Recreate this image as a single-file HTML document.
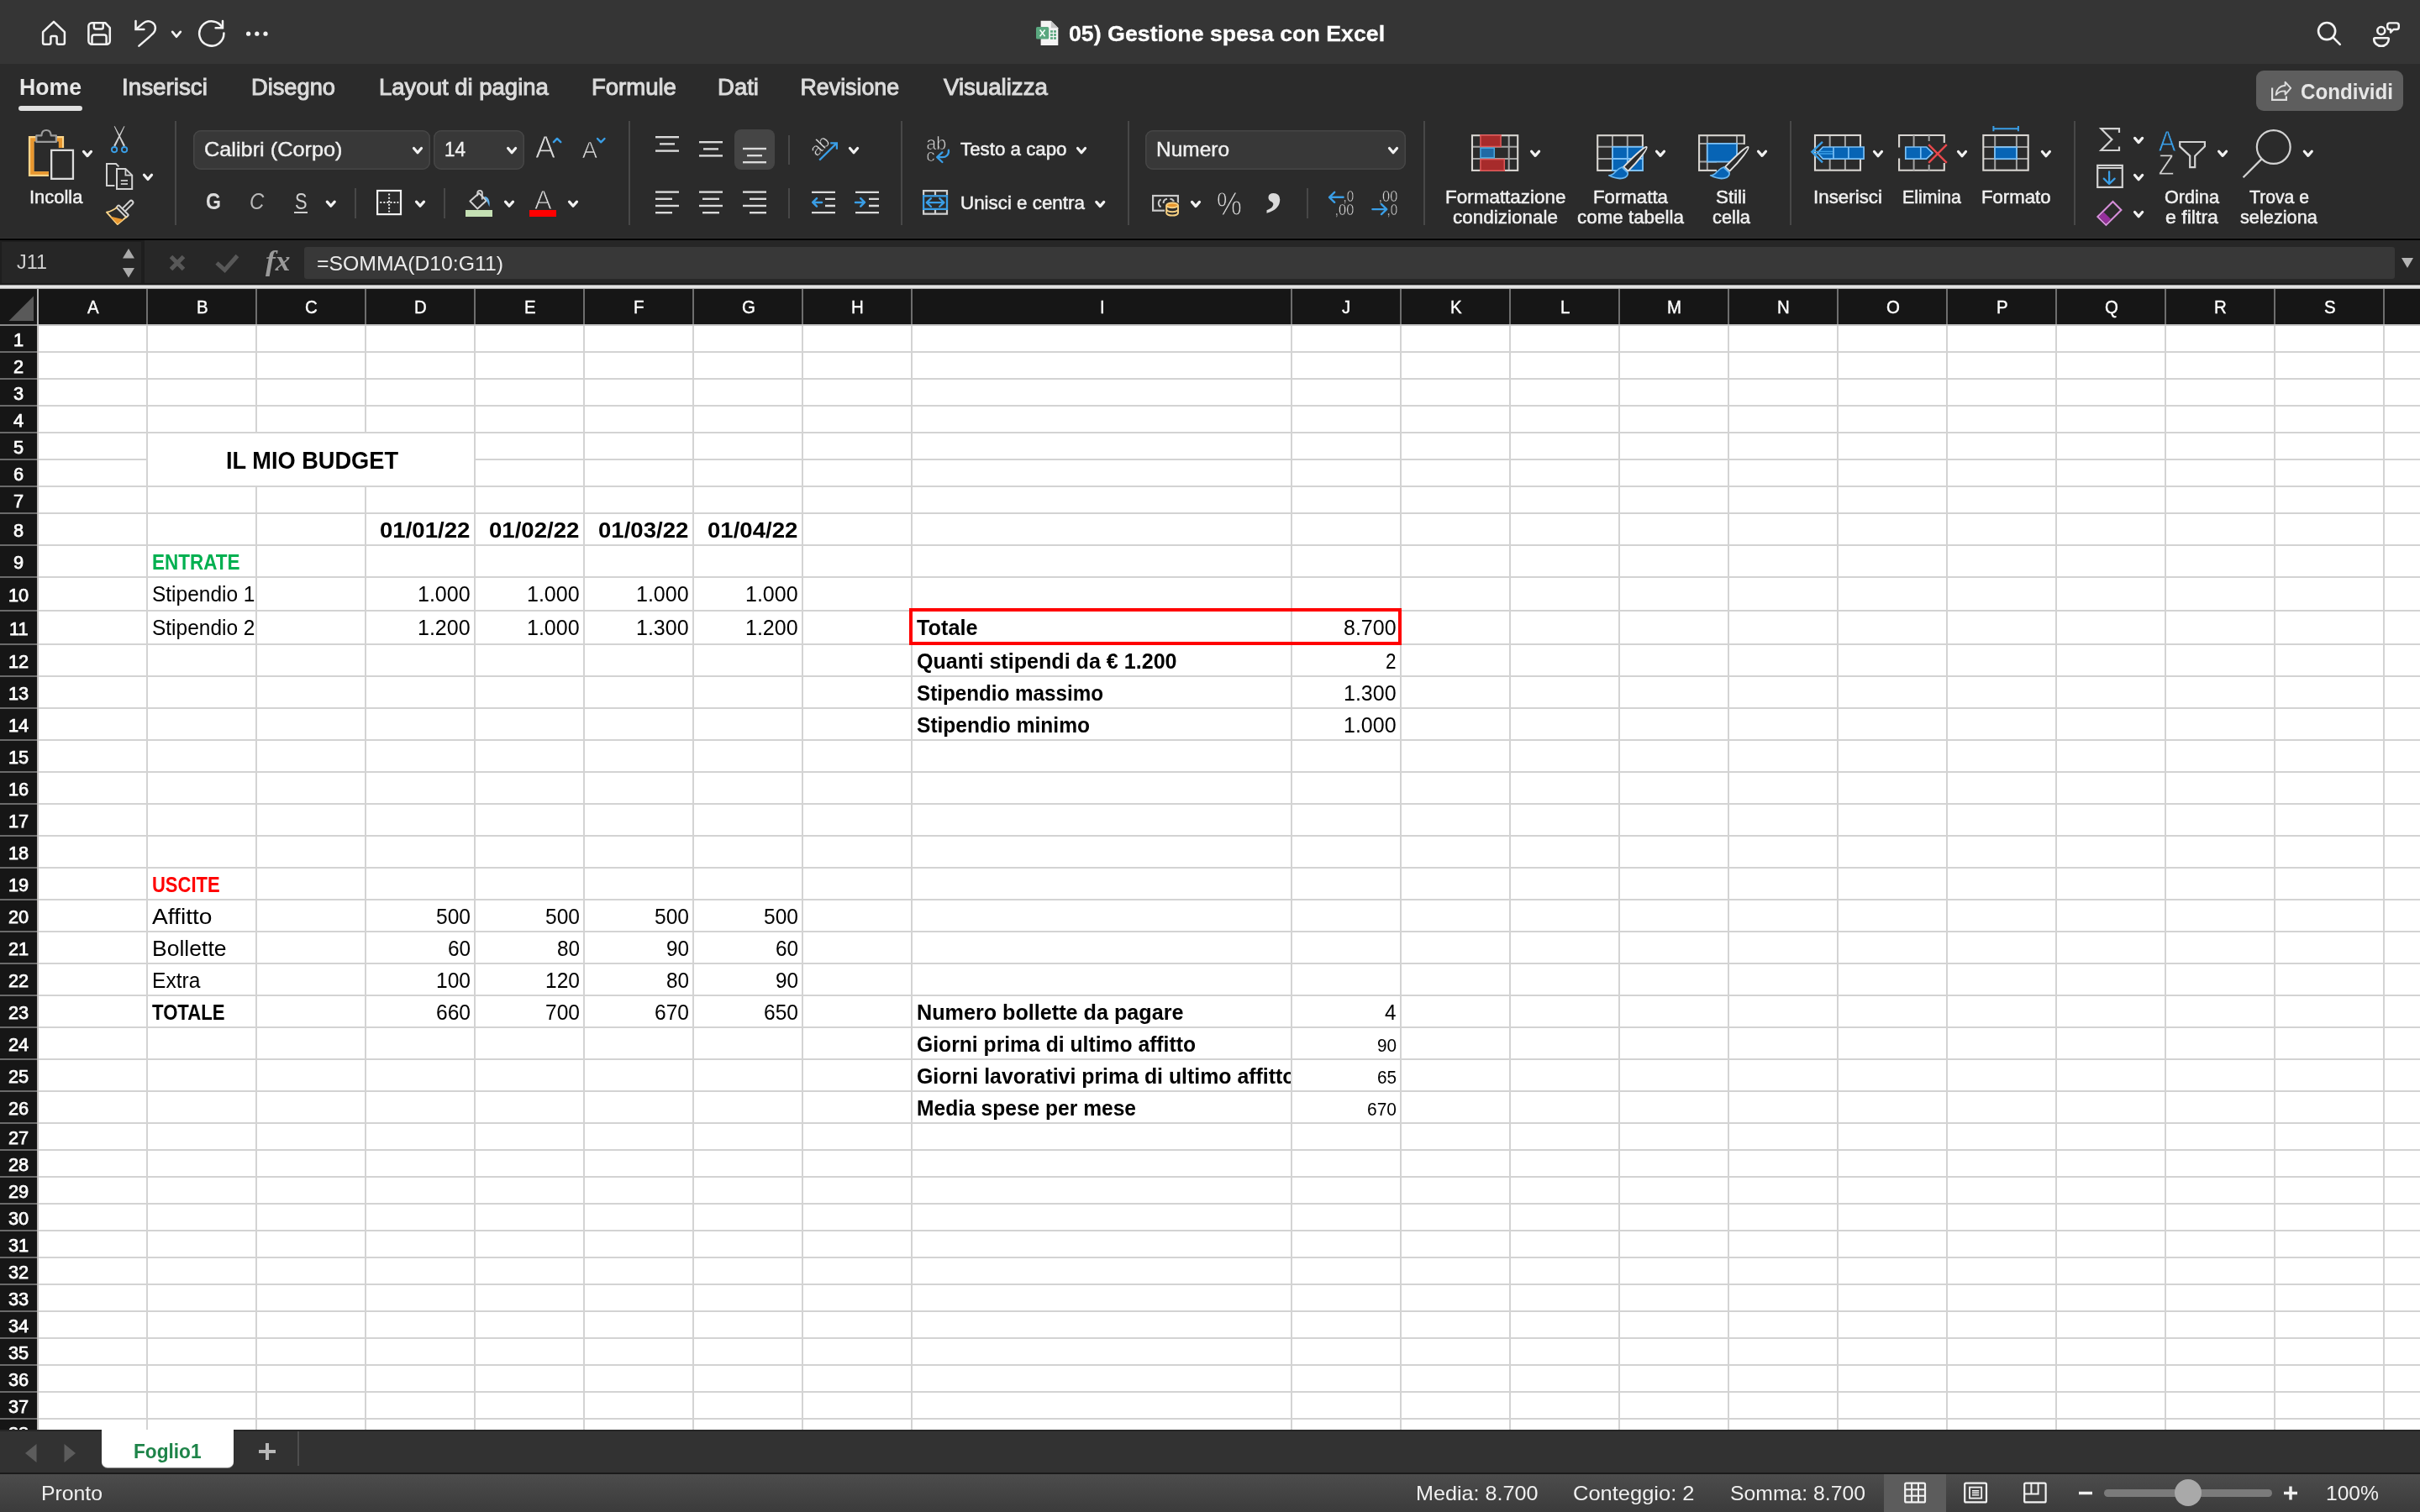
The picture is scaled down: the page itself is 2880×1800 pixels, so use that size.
<!DOCTYPE html>
<html lang="it"><head><meta charset="utf-8"><title>05) Gestione spesa con Excel</title>
<style>
html,body{margin:0;padding:0;background:#2b2b2b;}
body{width:2880px;height:1800px;overflow:hidden;position:relative;font-family:"Liberation Sans",sans-serif;}
#app{position:absolute;left:0;top:0;width:2880px;height:1800px;overflow:hidden;will-change:transform;}
#app div{position:absolute;box-sizing:content-box;}
.t{position:absolute;white-space:pre;transform-origin:0 0;display:block;}
#ico{position:absolute;left:0;top:0;}
</style></head>
<body>
<div id="app">
<div style="left:0px;top:0px;width:2880px;height:76px;background:#353535;"></div>
<div style="left:0px;top:76px;width:2880px;height:207px;background:#2b2b2b;"></div>
<div style="left:0px;top:283px;width:2880px;height:1px;background:#313131;"></div>
<div style="left:0px;top:284px;width:2880px;height:2px;background:#000000;"></div>
<div style="left:0px;top:286px;width:2880px;height:52px;background:#272727;"></div>
<div style="left:0px;top:286px;width:172px;height:52px;background:#1e1e1e;"></div>
<div style="left:2px;top:288px;width:166px;height:49px;background:#262626;"></div>
<div style="left:362px;top:294px;width:2488px;height:38px;background:#383838;border-radius:3px;"></div>
<div style="left:0px;top:337px;width:2880px;height:2px;background:#1b1b1b;"></div>
<div style="left:0px;top:339px;width:2880px;height:5px;background:linear-gradient(#8c8c8c,#e9e9e9 35%,#f2f2f2 60%,#9a9a9a);"></div>
<div style="left:0px;top:344px;width:2880px;height:43px;background:#161616;"></div>
<div style="left:0px;top:387px;width:44px;height:1315px;background:#161616;"></div>
<div style="left:44px;top:388px;width:2836px;height:1314px;background:#ffffff;"></div>
<div style="left:44px;top:386px;width:2836px;height:2px;background:#d3d3d3;"></div>
<div style="left:44px;top:418px;width:2836px;height:2px;background:#d3d3d3;"></div>
<div style="left:44px;top:450px;width:2836px;height:2px;background:#d3d3d3;"></div>
<div style="left:44px;top:482px;width:2836px;height:2px;background:#d3d3d3;"></div>
<div style="left:44px;top:514px;width:2836px;height:2px;background:#d3d3d3;"></div>
<div style="left:44px;top:546px;width:2836px;height:2px;background:#d3d3d3;"></div>
<div style="left:44px;top:578px;width:2836px;height:2px;background:#d3d3d3;"></div>
<div style="left:44px;top:610px;width:2836px;height:2px;background:#d3d3d3;"></div>
<div style="left:44px;top:648px;width:2836px;height:2px;background:#d3d3d3;"></div>
<div style="left:44px;top:686px;width:2836px;height:2px;background:#d3d3d3;"></div>
<div style="left:44px;top:726px;width:2836px;height:2px;background:#d3d3d3;"></div>
<div style="left:44px;top:766px;width:2836px;height:2px;background:#d3d3d3;"></div>
<div style="left:44px;top:804px;width:2836px;height:2px;background:#d3d3d3;"></div>
<div style="left:44px;top:842px;width:2836px;height:2px;background:#d3d3d3;"></div>
<div style="left:44px;top:880px;width:2836px;height:2px;background:#d3d3d3;"></div>
<div style="left:44px;top:918px;width:2836px;height:2px;background:#d3d3d3;"></div>
<div style="left:44px;top:956px;width:2836px;height:2px;background:#d3d3d3;"></div>
<div style="left:44px;top:994px;width:2836px;height:2px;background:#d3d3d3;"></div>
<div style="left:44px;top:1032px;width:2836px;height:2px;background:#d3d3d3;"></div>
<div style="left:44px;top:1070px;width:2836px;height:2px;background:#d3d3d3;"></div>
<div style="left:44px;top:1108px;width:2836px;height:2px;background:#d3d3d3;"></div>
<div style="left:44px;top:1146px;width:2836px;height:2px;background:#d3d3d3;"></div>
<div style="left:44px;top:1184px;width:2836px;height:2px;background:#d3d3d3;"></div>
<div style="left:44px;top:1222px;width:2836px;height:2px;background:#d3d3d3;"></div>
<div style="left:44px;top:1260px;width:2836px;height:2px;background:#d3d3d3;"></div>
<div style="left:44px;top:1298px;width:2836px;height:2px;background:#d3d3d3;"></div>
<div style="left:44px;top:1336px;width:2836px;height:2px;background:#d3d3d3;"></div>
<div style="left:44px;top:1368px;width:2836px;height:2px;background:#d3d3d3;"></div>
<div style="left:44px;top:1400px;width:2836px;height:2px;background:#d3d3d3;"></div>
<div style="left:44px;top:1432px;width:2836px;height:2px;background:#d3d3d3;"></div>
<div style="left:44px;top:1464px;width:2836px;height:2px;background:#d3d3d3;"></div>
<div style="left:44px;top:1496px;width:2836px;height:2px;background:#d3d3d3;"></div>
<div style="left:44px;top:1528px;width:2836px;height:2px;background:#d3d3d3;"></div>
<div style="left:44px;top:1560px;width:2836px;height:2px;background:#d3d3d3;"></div>
<div style="left:44px;top:1592px;width:2836px;height:2px;background:#d3d3d3;"></div>
<div style="left:44px;top:1624px;width:2836px;height:2px;background:#d3d3d3;"></div>
<div style="left:44px;top:1656px;width:2836px;height:2px;background:#d3d3d3;"></div>
<div style="left:44px;top:1688px;width:2836px;height:2px;background:#d3d3d3;"></div>
<div style="left:44px;top:386px;width:2px;height:1316px;background:#d3d3d3;"></div>
<div style="left:174px;top:386px;width:2px;height:1316px;background:#d3d3d3;"></div>
<div style="left:304px;top:386px;width:2px;height:1316px;background:#d3d3d3;"></div>
<div style="left:434px;top:386px;width:2px;height:1316px;background:#d3d3d3;"></div>
<div style="left:564px;top:386px;width:2px;height:1316px;background:#d3d3d3;"></div>
<div style="left:694px;top:386px;width:2px;height:1316px;background:#d3d3d3;"></div>
<div style="left:824px;top:386px;width:2px;height:1316px;background:#d3d3d3;"></div>
<div style="left:954px;top:386px;width:2px;height:1316px;background:#d3d3d3;"></div>
<div style="left:1084px;top:386px;width:2px;height:1316px;background:#d3d3d3;"></div>
<div style="left:1536px;top:386px;width:2px;height:1316px;background:#d3d3d3;"></div>
<div style="left:1666px;top:386px;width:2px;height:1316px;background:#d3d3d3;"></div>
<div style="left:1796px;top:386px;width:2px;height:1316px;background:#d3d3d3;"></div>
<div style="left:1926px;top:386px;width:2px;height:1316px;background:#d3d3d3;"></div>
<div style="left:2056px;top:386px;width:2px;height:1316px;background:#d3d3d3;"></div>
<div style="left:2186px;top:386px;width:2px;height:1316px;background:#d3d3d3;"></div>
<div style="left:2316px;top:386px;width:2px;height:1316px;background:#d3d3d3;"></div>
<div style="left:2446px;top:386px;width:2px;height:1316px;background:#d3d3d3;"></div>
<div style="left:2576px;top:386px;width:2px;height:1316px;background:#d3d3d3;"></div>
<div style="left:2706px;top:386px;width:2px;height:1316px;background:#d3d3d3;"></div>
<div style="left:2836px;top:386px;width:2px;height:1316px;background:#d3d3d3;"></div>
<div style="left:44px;top:388px;width:2px;height:1314px;background:#c0bebc;"></div>
<div style="left:176px;top:516px;width:388px;height:62px;background:#ffffff;"></div>
<div style="left:174px;top:344px;width:2px;height:42px;background:#6e6e6e;"></div>
<div style="left:304px;top:344px;width:2px;height:42px;background:#6e6e6e;"></div>
<div style="left:434px;top:344px;width:2px;height:42px;background:#6e6e6e;"></div>
<div style="left:564px;top:344px;width:2px;height:42px;background:#6e6e6e;"></div>
<div style="left:694px;top:344px;width:2px;height:42px;background:#6e6e6e;"></div>
<div style="left:824px;top:344px;width:2px;height:42px;background:#6e6e6e;"></div>
<div style="left:954px;top:344px;width:2px;height:42px;background:#6e6e6e;"></div>
<div style="left:1084px;top:344px;width:2px;height:42px;background:#6e6e6e;"></div>
<div style="left:1536px;top:344px;width:2px;height:42px;background:#6e6e6e;"></div>
<div style="left:1666px;top:344px;width:2px;height:42px;background:#6e6e6e;"></div>
<div style="left:1796px;top:344px;width:2px;height:42px;background:#6e6e6e;"></div>
<div style="left:1926px;top:344px;width:2px;height:42px;background:#6e6e6e;"></div>
<div style="left:2056px;top:344px;width:2px;height:42px;background:#6e6e6e;"></div>
<div style="left:2186px;top:344px;width:2px;height:42px;background:#6e6e6e;"></div>
<div style="left:2316px;top:344px;width:2px;height:42px;background:#6e6e6e;"></div>
<div style="left:2446px;top:344px;width:2px;height:42px;background:#6e6e6e;"></div>
<div style="left:2576px;top:344px;width:2px;height:42px;background:#6e6e6e;"></div>
<div style="left:2706px;top:344px;width:2px;height:42px;background:#6e6e6e;"></div>
<div style="left:2836px;top:344px;width:2px;height:42px;background:#6e6e6e;"></div>
<div style="left:44px;top:344px;width:2px;height:42px;background:#b4b4b4;"></div>
<div style="left:0px;top:386px;width:2880px;height:2px;background:#c6c6c6;"></div>
<div style="left:0px;top:386px;width:44px;height:2px;background:#8a8a8a;"></div>
<div style="left:0px;top:418px;width:44px;height:2px;background:#6a6a6a;"></div>
<div style="left:0px;top:450px;width:44px;height:2px;background:#6a6a6a;"></div>
<div style="left:0px;top:482px;width:44px;height:2px;background:#6a6a6a;"></div>
<div style="left:0px;top:514px;width:44px;height:2px;background:#6a6a6a;"></div>
<div style="left:0px;top:546px;width:44px;height:2px;background:#6a6a6a;"></div>
<div style="left:0px;top:578px;width:44px;height:2px;background:#6a6a6a;"></div>
<div style="left:0px;top:610px;width:44px;height:2px;background:#6a6a6a;"></div>
<div style="left:0px;top:648px;width:44px;height:2px;background:#6a6a6a;"></div>
<div style="left:0px;top:686px;width:44px;height:2px;background:#6a6a6a;"></div>
<div style="left:0px;top:726px;width:44px;height:2px;background:#6a6a6a;"></div>
<div style="left:0px;top:766px;width:44px;height:2px;background:#6a6a6a;"></div>
<div style="left:0px;top:804px;width:44px;height:2px;background:#6a6a6a;"></div>
<div style="left:0px;top:842px;width:44px;height:2px;background:#6a6a6a;"></div>
<div style="left:0px;top:880px;width:44px;height:2px;background:#6a6a6a;"></div>
<div style="left:0px;top:918px;width:44px;height:2px;background:#6a6a6a;"></div>
<div style="left:0px;top:956px;width:44px;height:2px;background:#6a6a6a;"></div>
<div style="left:0px;top:994px;width:44px;height:2px;background:#6a6a6a;"></div>
<div style="left:0px;top:1032px;width:44px;height:2px;background:#6a6a6a;"></div>
<div style="left:0px;top:1070px;width:44px;height:2px;background:#6a6a6a;"></div>
<div style="left:0px;top:1108px;width:44px;height:2px;background:#6a6a6a;"></div>
<div style="left:0px;top:1146px;width:44px;height:2px;background:#6a6a6a;"></div>
<div style="left:0px;top:1184px;width:44px;height:2px;background:#6a6a6a;"></div>
<div style="left:0px;top:1222px;width:44px;height:2px;background:#6a6a6a;"></div>
<div style="left:0px;top:1260px;width:44px;height:2px;background:#6a6a6a;"></div>
<div style="left:0px;top:1298px;width:44px;height:2px;background:#6a6a6a;"></div>
<div style="left:0px;top:1336px;width:44px;height:2px;background:#6a6a6a;"></div>
<div style="left:0px;top:1368px;width:44px;height:2px;background:#6a6a6a;"></div>
<div style="left:0px;top:1400px;width:44px;height:2px;background:#6a6a6a;"></div>
<div style="left:0px;top:1432px;width:44px;height:2px;background:#6a6a6a;"></div>
<div style="left:0px;top:1464px;width:44px;height:2px;background:#6a6a6a;"></div>
<div style="left:0px;top:1496px;width:44px;height:2px;background:#6a6a6a;"></div>
<div style="left:0px;top:1528px;width:44px;height:2px;background:#6a6a6a;"></div>
<div style="left:0px;top:1560px;width:44px;height:2px;background:#6a6a6a;"></div>
<div style="left:0px;top:1592px;width:44px;height:2px;background:#6a6a6a;"></div>
<div style="left:0px;top:1624px;width:44px;height:2px;background:#6a6a6a;"></div>
<div style="left:0px;top:1656px;width:44px;height:2px;background:#6a6a6a;"></div>
<div style="left:0px;top:1688px;width:44px;height:2px;background:#6a6a6a;"></div>
<span class="t" style="left:103.65px;top:355.38px;font-size:22px;line-height:22px;color:#ffffff;transform:scaleX(0.9300);-webkit-text-stroke:0.4px #ffffff;">A</span>
<span class="t" style="left:233.70px;top:355.38px;font-size:22px;line-height:22px;color:#ffffff;transform:scaleX(0.9300);-webkit-text-stroke:0.4px #ffffff;">B</span>
<span class="t" style="left:363.13px;top:355.38px;font-size:22px;line-height:22px;color:#ffffff;transform:scaleX(0.9300);-webkit-text-stroke:0.4px #ffffff;">C</span>
<span class="t" style="left:493.13px;top:355.38px;font-size:22px;line-height:22px;color:#ffffff;transform:scaleX(0.9300);-webkit-text-stroke:0.4px #ffffff;">D</span>
<span class="t" style="left:623.70px;top:355.38px;font-size:22px;line-height:22px;color:#ffffff;transform:scaleX(0.9300);-webkit-text-stroke:0.4px #ffffff;">E</span>
<span class="t" style="left:754.26px;top:355.38px;font-size:22px;line-height:22px;color:#ffffff;transform:scaleX(0.9300);-webkit-text-stroke:0.4px #ffffff;">F</span>
<span class="t" style="left:882.52px;top:355.38px;font-size:22px;line-height:22px;color:#ffffff;transform:scaleX(0.9300);-webkit-text-stroke:0.4px #ffffff;">G</span>
<span class="t" style="left:1013.13px;top:355.38px;font-size:22px;line-height:22px;color:#ffffff;transform:scaleX(0.9300);-webkit-text-stroke:0.4px #ffffff;">H</span>
<span class="t" style="left:1308.64px;top:355.38px;font-size:22px;line-height:22px;color:#ffffff;transform:scaleX(0.9300);-webkit-text-stroke:0.4px #ffffff;">I</span>
<span class="t" style="left:1597.38px;top:355.38px;font-size:22px;line-height:22px;color:#ffffff;transform:scaleX(0.9300);-webkit-text-stroke:0.4px #ffffff;">J</span>
<span class="t" style="left:1725.70px;top:355.38px;font-size:22px;line-height:22px;color:#ffffff;transform:scaleX(0.9300);-webkit-text-stroke:0.4px #ffffff;">K</span>
<span class="t" style="left:1856.82px;top:355.38px;font-size:22px;line-height:22px;color:#ffffff;transform:scaleX(0.9300);-webkit-text-stroke:0.4px #ffffff;">L</span>
<span class="t" style="left:1983.96px;top:355.38px;font-size:22px;line-height:22px;color:#ffffff;transform:scaleX(0.9300);-webkit-text-stroke:0.4px #ffffff;">M</span>
<span class="t" style="left:2115.13px;top:355.38px;font-size:22px;line-height:22px;color:#ffffff;transform:scaleX(0.9300);-webkit-text-stroke:0.4px #ffffff;">N</span>
<span class="t" style="left:2244.52px;top:355.38px;font-size:22px;line-height:22px;color:#ffffff;transform:scaleX(0.9300);-webkit-text-stroke:0.4px #ffffff;">O</span>
<span class="t" style="left:2375.70px;top:355.38px;font-size:22px;line-height:22px;color:#ffffff;transform:scaleX(0.9300);-webkit-text-stroke:0.4px #ffffff;">P</span>
<span class="t" style="left:2504.52px;top:355.38px;font-size:22px;line-height:22px;color:#ffffff;transform:scaleX(0.9300);-webkit-text-stroke:0.4px #ffffff;">Q</span>
<span class="t" style="left:2635.13px;top:355.38px;font-size:22px;line-height:22px;color:#ffffff;transform:scaleX(0.9300);-webkit-text-stroke:0.4px #ffffff;">R</span>
<span class="t" style="left:2765.70px;top:355.38px;font-size:22px;line-height:22px;color:#ffffff;transform:scaleX(0.9300);-webkit-text-stroke:0.4px #ffffff;">S</span>
<span class="t" style="left:15.96px;top:394.38px;font-size:22px;line-height:22px;color:#ffffff;transform:scaleX(0.9900);-webkit-text-stroke:0.75px #ffffff;">1</span>
<span class="t" style="left:15.96px;top:426.38px;font-size:22px;line-height:22px;color:#ffffff;transform:scaleX(0.9900);-webkit-text-stroke:0.75px #ffffff;">2</span>
<span class="t" style="left:15.96px;top:458.38px;font-size:22px;line-height:22px;color:#ffffff;transform:scaleX(0.9900);-webkit-text-stroke:0.75px #ffffff;">3</span>
<span class="t" style="left:15.96px;top:490.38px;font-size:22px;line-height:22px;color:#ffffff;transform:scaleX(0.9900);-webkit-text-stroke:0.75px #ffffff;">4</span>
<span class="t" style="left:15.96px;top:522.38px;font-size:22px;line-height:22px;color:#ffffff;transform:scaleX(0.9900);-webkit-text-stroke:0.75px #ffffff;">5</span>
<span class="t" style="left:15.96px;top:554.38px;font-size:22px;line-height:22px;color:#ffffff;transform:scaleX(0.9900);-webkit-text-stroke:0.75px #ffffff;">6</span>
<span class="t" style="left:15.96px;top:586.38px;font-size:22px;line-height:22px;color:#ffffff;transform:scaleX(0.9900);-webkit-text-stroke:0.75px #ffffff;">7</span>
<span class="t" style="left:15.96px;top:621.38px;font-size:22px;line-height:22px;color:#ffffff;transform:scaleX(0.9900);-webkit-text-stroke:0.75px #ffffff;">8</span>
<span class="t" style="left:15.96px;top:659.38px;font-size:22px;line-height:22px;color:#ffffff;transform:scaleX(0.9900);-webkit-text-stroke:0.75px #ffffff;">9</span>
<span class="t" style="left:9.91px;top:698.38px;font-size:22px;line-height:22px;color:#ffffff;transform:scaleX(0.9900);-webkit-text-stroke:0.75px #ffffff;">10</span>
<span class="t" style="left:10.67px;top:738.38px;font-size:22px;line-height:22px;color:#ffffff;transform:scaleX(0.9900);-webkit-text-stroke:0.75px #ffffff;">11</span>
<span class="t" style="left:9.91px;top:777.38px;font-size:22px;line-height:22px;color:#ffffff;transform:scaleX(0.9900);-webkit-text-stroke:0.75px #ffffff;">12</span>
<span class="t" style="left:9.91px;top:815.38px;font-size:22px;line-height:22px;color:#ffffff;transform:scaleX(0.9900);-webkit-text-stroke:0.75px #ffffff;">13</span>
<span class="t" style="left:9.91px;top:853.38px;font-size:22px;line-height:22px;color:#ffffff;transform:scaleX(0.9900);-webkit-text-stroke:0.75px #ffffff;">14</span>
<span class="t" style="left:9.91px;top:891.38px;font-size:22px;line-height:22px;color:#ffffff;transform:scaleX(0.9900);-webkit-text-stroke:0.75px #ffffff;">15</span>
<span class="t" style="left:9.91px;top:929.38px;font-size:22px;line-height:22px;color:#ffffff;transform:scaleX(0.9900);-webkit-text-stroke:0.75px #ffffff;">16</span>
<span class="t" style="left:9.91px;top:967.38px;font-size:22px;line-height:22px;color:#ffffff;transform:scaleX(0.9900);-webkit-text-stroke:0.75px #ffffff;">17</span>
<span class="t" style="left:9.91px;top:1005.38px;font-size:22px;line-height:22px;color:#ffffff;transform:scaleX(0.9900);-webkit-text-stroke:0.75px #ffffff;">18</span>
<span class="t" style="left:9.91px;top:1043.38px;font-size:22px;line-height:22px;color:#ffffff;transform:scaleX(0.9900);-webkit-text-stroke:0.75px #ffffff;">19</span>
<span class="t" style="left:9.91px;top:1081.38px;font-size:22px;line-height:22px;color:#ffffff;transform:scaleX(0.9900);-webkit-text-stroke:0.75px #ffffff;">20</span>
<span class="t" style="left:9.91px;top:1119.38px;font-size:22px;line-height:22px;color:#ffffff;transform:scaleX(0.9900);-webkit-text-stroke:0.75px #ffffff;">21</span>
<span class="t" style="left:9.91px;top:1157.38px;font-size:22px;line-height:22px;color:#ffffff;transform:scaleX(0.9900);-webkit-text-stroke:0.75px #ffffff;">22</span>
<span class="t" style="left:9.91px;top:1195.38px;font-size:22px;line-height:22px;color:#ffffff;transform:scaleX(0.9900);-webkit-text-stroke:0.75px #ffffff;">23</span>
<span class="t" style="left:9.91px;top:1233.38px;font-size:22px;line-height:22px;color:#ffffff;transform:scaleX(0.9900);-webkit-text-stroke:0.75px #ffffff;">24</span>
<span class="t" style="left:9.91px;top:1271.38px;font-size:22px;line-height:22px;color:#ffffff;transform:scaleX(0.9900);-webkit-text-stroke:0.75px #ffffff;">25</span>
<span class="t" style="left:9.91px;top:1309.38px;font-size:22px;line-height:22px;color:#ffffff;transform:scaleX(0.9900);-webkit-text-stroke:0.75px #ffffff;">26</span>
<span class="t" style="left:9.91px;top:1344.38px;font-size:22px;line-height:22px;color:#ffffff;transform:scaleX(0.9900);-webkit-text-stroke:0.75px #ffffff;">27</span>
<span class="t" style="left:9.91px;top:1376.38px;font-size:22px;line-height:22px;color:#ffffff;transform:scaleX(0.9900);-webkit-text-stroke:0.75px #ffffff;">28</span>
<span class="t" style="left:9.91px;top:1408.38px;font-size:22px;line-height:22px;color:#ffffff;transform:scaleX(0.9900);-webkit-text-stroke:0.75px #ffffff;">29</span>
<span class="t" style="left:9.91px;top:1440.38px;font-size:22px;line-height:22px;color:#ffffff;transform:scaleX(0.9900);-webkit-text-stroke:0.75px #ffffff;">30</span>
<span class="t" style="left:9.91px;top:1472.38px;font-size:22px;line-height:22px;color:#ffffff;transform:scaleX(0.9900);-webkit-text-stroke:0.75px #ffffff;">31</span>
<span class="t" style="left:9.91px;top:1504.38px;font-size:22px;line-height:22px;color:#ffffff;transform:scaleX(0.9900);-webkit-text-stroke:0.75px #ffffff;">32</span>
<span class="t" style="left:9.91px;top:1536.38px;font-size:22px;line-height:22px;color:#ffffff;transform:scaleX(0.9900);-webkit-text-stroke:0.75px #ffffff;">33</span>
<span class="t" style="left:9.91px;top:1568.38px;font-size:22px;line-height:22px;color:#ffffff;transform:scaleX(0.9900);-webkit-text-stroke:0.75px #ffffff;">34</span>
<span class="t" style="left:9.91px;top:1600.38px;font-size:22px;line-height:22px;color:#ffffff;transform:scaleX(0.9900);-webkit-text-stroke:0.75px #ffffff;">35</span>
<span class="t" style="left:9.91px;top:1632.38px;font-size:22px;line-height:22px;color:#ffffff;transform:scaleX(0.9900);-webkit-text-stroke:0.75px #ffffff;">36</span>
<span class="t" style="left:9.91px;top:1664.38px;font-size:22px;line-height:22px;color:#ffffff;transform:scaleX(0.9900);-webkit-text-stroke:0.75px #ffffff;">37</span>
<span class="t" style="left:9.91px;top:1696.38px;font-size:22px;line-height:22px;color:#ffffff;transform:scaleX(0.9900);-webkit-text-stroke:0.75px #ffffff;">38</span>
<span class="t" style="left:180.50px;top:656.84px;font-size:25px;line-height:25px;color:#00b050;transform:scaleX(0.8989);font-weight:700;">ENTRATE</span>
<span class="t" style="left:180.50px;top:694.84px;font-size:25px;line-height:25px;color:#000000;transform:scaleX(0.9790);">Stipendio 1</span>
<span class="t" style="left:180.50px;top:734.84px;font-size:25px;line-height:25px;color:#000000;transform:scaleX(0.9790);">Stipendio 2</span>
<span class="t" style="left:180.50px;top:1040.84px;font-size:25px;line-height:25px;color:#ff0000;transform:scaleX(0.8786);font-weight:700;">USCITE</span>
<span class="t" style="left:180.50px;top:1078.84px;font-size:25px;line-height:25px;color:#000000;transform:scaleX(1.1260);">Affitto</span>
<span class="t" style="left:180.50px;top:1116.84px;font-size:25px;line-height:25px;color:#000000;transform:scaleX(1.0615);">Bollette</span>
<span class="t" style="left:180.50px;top:1154.84px;font-size:25px;line-height:25px;color:#000000;transform:scaleX(0.9829);">Extra</span>
<span class="t" style="left:180.50px;top:1192.84px;font-size:25px;line-height:25px;color:#000000;transform:scaleX(0.8860);font-weight:700;">TOTALE</span>
<span class="t" style="left:268.50px;top:533.79px;font-size:28.6px;line-height:28.6px;color:#000000;transform:scaleX(0.9513);font-weight:700;">IL MIO BUDGET</span>
<span class="t" style="left:452.00px;top:618.84px;font-size:25px;line-height:25px;color:#000000;transform:scaleX(1.1040);font-weight:700;">01/01/22</span>
<span class="t" style="left:582.00px;top:618.84px;font-size:25px;line-height:25px;color:#000000;transform:scaleX(1.1040);font-weight:700;">01/02/22</span>
<span class="t" style="left:712.00px;top:618.84px;font-size:25px;line-height:25px;color:#000000;transform:scaleX(1.1040);font-weight:700;">01/03/22</span>
<span class="t" style="left:842.00px;top:618.84px;font-size:25px;line-height:25px;color:#000000;transform:scaleX(1.1040);font-weight:700;">01/04/22</span>
<span class="t" style="left:497.00px;top:694.84px;font-size:25px;line-height:25px;color:#000000;">1.000</span>
<span class="t" style="left:627.00px;top:694.84px;font-size:25px;line-height:25px;color:#000000;">1.000</span>
<span class="t" style="left:757.00px;top:694.84px;font-size:25px;line-height:25px;color:#000000;">1.000</span>
<span class="t" style="left:887.00px;top:694.84px;font-size:25px;line-height:25px;color:#000000;">1.000</span>
<span class="t" style="left:497.00px;top:734.84px;font-size:25px;line-height:25px;color:#000000;">1.200</span>
<span class="t" style="left:627.00px;top:734.84px;font-size:25px;line-height:25px;color:#000000;">1.000</span>
<span class="t" style="left:757.00px;top:734.84px;font-size:25px;line-height:25px;color:#000000;">1.300</span>
<span class="t" style="left:887.00px;top:734.84px;font-size:25px;line-height:25px;color:#000000;">1.200</span>
<span class="t" style="left:518.50px;top:1078.84px;font-size:25px;line-height:25px;color:#000000;transform:scaleX(0.9820);">500</span>
<span class="t" style="left:648.50px;top:1078.84px;font-size:25px;line-height:25px;color:#000000;transform:scaleX(0.9820);">500</span>
<span class="t" style="left:778.50px;top:1078.84px;font-size:25px;line-height:25px;color:#000000;transform:scaleX(0.9820);">500</span>
<span class="t" style="left:908.50px;top:1078.84px;font-size:25px;line-height:25px;color:#000000;transform:scaleX(0.9820);">500</span>
<span class="t" style="left:532.50px;top:1116.84px;font-size:25px;line-height:25px;color:#000000;transform:scaleX(0.9730);">60</span>
<span class="t" style="left:662.50px;top:1116.84px;font-size:25px;line-height:25px;color:#000000;transform:scaleX(0.9730);">80</span>
<span class="t" style="left:792.50px;top:1116.84px;font-size:25px;line-height:25px;color:#000000;transform:scaleX(0.9730);">90</span>
<span class="t" style="left:922.50px;top:1116.84px;font-size:25px;line-height:25px;color:#000000;transform:scaleX(0.9730);">60</span>
<span class="t" style="left:518.50px;top:1154.84px;font-size:25px;line-height:25px;color:#000000;transform:scaleX(0.9820);">100</span>
<span class="t" style="left:648.50px;top:1154.84px;font-size:25px;line-height:25px;color:#000000;transform:scaleX(0.9820);">120</span>
<span class="t" style="left:792.50px;top:1154.84px;font-size:25px;line-height:25px;color:#000000;transform:scaleX(0.9730);">80</span>
<span class="t" style="left:922.50px;top:1154.84px;font-size:25px;line-height:25px;color:#000000;transform:scaleX(0.9730);">90</span>
<span class="t" style="left:518.50px;top:1192.84px;font-size:25px;line-height:25px;color:#000000;transform:scaleX(0.9820);">660</span>
<span class="t" style="left:648.50px;top:1192.84px;font-size:25px;line-height:25px;color:#000000;transform:scaleX(0.9820);">700</span>
<span class="t" style="left:778.50px;top:1192.84px;font-size:25px;line-height:25px;color:#000000;transform:scaleX(0.9820);">670</span>
<span class="t" style="left:908.50px;top:1192.84px;font-size:25px;line-height:25px;color:#000000;transform:scaleX(0.9820);">650</span>
<span class="t" style="left:1090.50px;top:734.84px;font-size:25px;line-height:25px;color:#000000;transform:scaleX(1.0105);font-weight:700;">Totale</span>
<span class="t" style="left:1090.50px;top:774.84px;font-size:25px;line-height:25px;color:#000000;transform:scaleX(1.0036);font-weight:700;">Quanti stipendi da € 1.200</span>
<span class="t" style="left:1090.50px;top:812.84px;font-size:25px;line-height:25px;color:#000000;transform:scaleX(0.9684);font-weight:700;">Stipendio massimo</span>
<span class="t" style="left:1090.50px;top:850.84px;font-size:25px;line-height:25px;color:#000000;transform:scaleX(0.9821);font-weight:700;">Stipendio minimo</span>
<span class="t" style="left:1599.00px;top:734.84px;font-size:25px;line-height:25px;color:#000000;">8.700</span>
<span class="t" style="left:1649.00px;top:774.84px;font-size:25px;line-height:25px;color:#000000;transform:scaleX(0.9009);">2</span>
<span class="t" style="left:1599.00px;top:812.84px;font-size:25px;line-height:25px;color:#000000;">1.300</span>
<span class="t" style="left:1599.00px;top:850.84px;font-size:25px;line-height:25px;color:#000000;">1.000</span>
<span class="t" style="left:1090.50px;top:1192.84px;font-size:25px;line-height:25px;color:#000000;transform:scaleX(1.0067);font-weight:700;">Numero bollette da pagare</span>
<span class="t" style="left:1090.50px;top:1230.84px;font-size:25px;line-height:25px;color:#000000;transform:scaleX(0.9877);font-weight:700;">Giorni prima di ultimo affitto</span>
<div style="left:1086px;top:1262px;width:450px;height:36px;overflow:hidden;background:none" class="clip">
<span class="t" style="left:4.50px;top:6.84px;font-size:25px;line-height:25px;color:#000000;transform:scaleX(0.9948);font-weight:700;">Giorni lavorativi prima di ultimo affitto</span>
</div>
<span class="t" style="left:1090.50px;top:1306.84px;font-size:25px;line-height:25px;color:#000000;transform:scaleX(0.9835);font-weight:700;">Media spese per mese</span>
<span class="t" style="left:1648.00px;top:1192.84px;font-size:25px;line-height:25px;color:#000000;transform:scaleX(0.9730);">4</span>
<span class="t" style="left:1638.50px;top:1235.30px;font-size:21.5px;line-height:21.5px;color:#000000;transform:scaleX(0.9638);">90</span>
<span class="t" style="left:1638.50px;top:1273.30px;font-size:21.5px;line-height:21.5px;color:#000000;transform:scaleX(0.9638);">65</span>
<span class="t" style="left:1626.50px;top:1311.30px;font-size:21.5px;line-height:21.5px;color:#000000;transform:scaleX(0.9748);">670</span>
<div style="left:1082px;top:724px;width:578px;height:36px;border:4px solid #ff0000;background:none"></div>
<div style="left:0px;top:1702px;width:2880px;height:53px;background:#323232;"></div>
<div style="left:0px;top:1702px;width:2880px;height:2px;background:#262626;"></div>
<div style="left:121px;top:1702px;width:157px;height:44.5px;background:#ffffff;border-radius:0 0 7px 7px;box-shadow:0 1px 0 #8c8c8c;"></div>
<span class="t" style="left:159.00px;top:1715.98px;font-size:24px;line-height:24px;color:#1e8449;transform:scaleX(0.9435);font-weight:700;">Foglio1</span>
<div style="left:354px;top:1704px;width:2px;height:41px;background:#4e4e4e;"></div>
<div style="left:0px;top:1753px;width:2880px;height:2px;background:#1a1a1a;"></div>
<div style="left:0px;top:1755px;width:2880px;height:45px;background:linear-gradient(#4c4c4c,#3b3b3b);"></div>
<span class="t" style="left:49.00px;top:1766.48px;font-size:24px;line-height:24px;color:#f0f0f0;transform:scaleX(1.0328);">Pronto</span>
<span class="t" style="left:1685.00px;top:1766.48px;font-size:24px;line-height:24px;color:#f0f0f0;transform:scaleX(1.0489);">Media: 8.700</span>
<span class="t" style="left:1872.00px;top:1766.48px;font-size:24px;line-height:24px;color:#f0f0f0;transform:scaleX(1.0619);">Conteggio: 2</span>
<span class="t" style="left:2059.00px;top:1766.48px;font-size:24px;line-height:24px;color:#f0f0f0;transform:scaleX(1.0313);">Somma: 8.700</span>
<span class="t" style="left:2768.00px;top:1766.48px;font-size:24px;line-height:24px;color:#f0f0f0;transform:scaleX(1.0254);">100%</span>
<div style="left:2242px;top:1755px;width:74px;height:45px;background:#5c5c5c;"></div>
<div style="left:2504px;top:1773px;width:200px;height:9px;background:#7b7b7b;border-radius:5px;"></div>
<div style="left:2588px;top:1761px;width:32px;height:32px;background:#a9a9a9;border-radius:50%;"></div>
<span class="t" style="left:1271.50px;top:27.37px;font-size:26.5px;line-height:26.5px;color:#ffffff;transform:scaleX(1.0092);font-weight:700;-webkit-text-stroke:0.3px #ffffff;">05) Gestione spesa con Excel</span>
<span class="t" style="left:23.00px;top:91.31px;font-size:26.8px;line-height:26.8px;color:#e8e8e8;transform:scaleX(0.9932);font-weight:700;">Home</span>
<div style="left:22px;top:126px;width:76px;height:6px;background:#e0e0e0;border-radius:3px;"></div>
<span class="t" style="left:145.00px;top:91.31px;font-size:26.8px;line-height:26.8px;color:#dcdcdc;transform:scaleX(1.0370);-webkit-text-stroke:1.0px #dcdcdc;">Inserisci</span>
<span class="t" style="left:299.00px;top:91.31px;font-size:26.8px;line-height:26.8px;color:#dcdcdc;transform:scaleX(1.0167);-webkit-text-stroke:1.0px #dcdcdc;">Disegno</span>
<span class="t" style="left:450.50px;top:91.31px;font-size:26.8px;line-height:26.8px;color:#dcdcdc;transform:scaleX(1.0262);-webkit-text-stroke:1.0px #dcdcdc;">Layout di pagina</span>
<span class="t" style="left:704.00px;top:91.31px;font-size:26.8px;line-height:26.8px;color:#dcdcdc;transform:scaleX(1.0269);-webkit-text-stroke:1.0px #dcdcdc;">Formule</span>
<span class="t" style="left:854.00px;top:91.31px;font-size:26.8px;line-height:26.8px;color:#dcdcdc;transform:scaleX(1.0272);-webkit-text-stroke:1.0px #dcdcdc;">Dati</span>
<span class="t" style="left:952.50px;top:91.31px;font-size:26.8px;line-height:26.8px;color:#dcdcdc;-webkit-text-stroke:1.0px #dcdcdc;">Revisione</span>
<span class="t" style="left:1122.50px;top:91.31px;font-size:26.8px;line-height:26.8px;color:#dcdcdc;transform:scaleX(1.0305);-webkit-text-stroke:1.0px #dcdcdc;">Visualizza</span>
<div style="left:2685px;top:84px;width:175px;height:48px;background:#5e5e5e;border-radius:9px;"></div>
<span class="t" style="left:2737.50px;top:96.84px;font-size:25px;line-height:25px;color:#e6e6e6;transform:scaleX(0.9660);font-weight:700;">Condividi</span>
<span class="t" style="left:34.50px;top:224.38px;font-size:22px;line-height:22px;color:#f0f0f0;transform:scaleX(0.9970);-webkit-text-stroke:0.5px #f0f0f0;">Incolla</span>
<span class="t" style="left:1719.50px;top:223.73px;font-size:22px;line-height:22px;color:#f0f0f0;transform:scaleX(1.0208);-webkit-text-stroke:0.5px #f0f0f0;">Formattazione</span>
<span class="t" style="left:1729.00px;top:247.98px;font-size:22px;line-height:22px;color:#f0f0f0;transform:scaleX(1.0219);-webkit-text-stroke:0.5px #f0f0f0;">condizionale</span>
<span class="t" style="left:1896.00px;top:223.73px;font-size:22px;line-height:22px;color:#f0f0f0;transform:scaleX(1.0101);-webkit-text-stroke:0.5px #f0f0f0;">Formatta</span>
<span class="t" style="left:1877.00px;top:247.98px;font-size:22px;line-height:22px;color:#f0f0f0;transform:scaleX(1.0172);-webkit-text-stroke:0.5px #f0f0f0;">come tabella</span>
<span class="t" style="left:2042.00px;top:223.73px;font-size:22px;line-height:22px;color:#f0f0f0;transform:scaleX(1.0164);-webkit-text-stroke:0.5px #f0f0f0;">Stili</span>
<span class="t" style="left:2037.50px;top:247.98px;font-size:22px;line-height:22px;color:#f0f0f0;transform:scaleX(0.9929);-webkit-text-stroke:0.5px #f0f0f0;">cella</span>
<span class="t" style="left:2157.50px;top:223.73px;font-size:22px;line-height:22px;color:#f0f0f0;transform:scaleX(1.0156);-webkit-text-stroke:0.5px #f0f0f0;">Inserisci</span>
<span class="t" style="left:2264.00px;top:223.73px;font-size:22px;line-height:22px;color:#f0f0f0;transform:scaleX(0.9686);-webkit-text-stroke:0.5px #f0f0f0;">Elimina</span>
<span class="t" style="left:2357.50px;top:223.73px;font-size:22px;line-height:22px;color:#f0f0f0;transform:scaleX(1.0067);-webkit-text-stroke:0.5px #f0f0f0;">Formato</span>
<span class="t" style="left:2576.00px;top:223.73px;font-size:22px;line-height:22px;color:#f0f0f0;transform:scaleX(0.9832);-webkit-text-stroke:0.5px #f0f0f0;">Ordina</span>
<span class="t" style="left:2577.00px;top:247.98px;font-size:22px;line-height:22px;color:#f0f0f0;transform:scaleX(1.0509);-webkit-text-stroke:0.5px #f0f0f0;">e filtra</span>
<span class="t" style="left:2677.00px;top:223.73px;font-size:22px;line-height:22px;color:#f0f0f0;transform:scaleX(0.9619);-webkit-text-stroke:0.5px #f0f0f0;">Trova e</span>
<span class="t" style="left:2666.00px;top:247.98px;font-size:22px;line-height:22px;color:#f0f0f0;transform:scaleX(0.9886);-webkit-text-stroke:0.5px #f0f0f0;">seleziona</span>
<span class="t" style="left:1142.50px;top:167.48px;font-size:22px;line-height:22px;color:#f0f0f0;transform:scaleX(1.0141);-webkit-text-stroke:0.5px #f0f0f0;">Testo a capo</span>
<span class="t" style="left:1142.50px;top:230.98px;font-size:22px;line-height:22px;color:#f0f0f0;transform:scaleX(1.0162);-webkit-text-stroke:0.5px #f0f0f0;">Unisci e centra</span>
<div style="left:230px;top:154.5px;width:281.6px;height:47px;background:#383838;box-shadow:inset 0 0 0 1.5px #464646;border-radius:9px;"></div>
<div style="left:516px;top:154.5px;width:108px;height:47px;background:#383838;box-shadow:inset 0 0 0 1.5px #464646;border-radius:9px;"></div>
<div style="left:1363px;top:154.5px;width:309.5px;height:47px;background:#383838;box-shadow:inset 0 0 0 1.5px #464646;border-radius:9px;"></div>
<span class="t" style="left:242.50px;top:166.06px;font-size:24.5px;line-height:24.5px;color:#f0f0f0;transform:scaleX(1.0330);-webkit-text-stroke:0.4px #f0f0f0;">Calibri (Corpo)</span>
<span class="t" style="left:528.50px;top:166.06px;font-size:24.5px;line-height:24.5px;color:#f0f0f0;transform:scaleX(0.9119);-webkit-text-stroke:0.5px #f0f0f0;">14</span>
<span class="t" style="left:1376.00px;top:167.31px;font-size:23.5px;line-height:23.5px;color:#f0f0f0;transform:scaleX(1.0414);-webkit-text-stroke:0.4px #f0f0f0;">Numero</span>
<div style="left:874px;top:154px;width:48px;height:48px;background:#454545;border-radius:8px;"></div>
<span class="t" style="left:244.50px;top:226.94px;font-size:27px;line-height:27px;color:#dcdcdc;transform:scaleX(0.8547);font-weight:700;">G</span>
<span class="t" style="left:297.00px;top:226.94px;font-size:27px;line-height:27px;color:#b9b9b9;transform:scaleX(0.8879);font-style:italic;">C</span>
<span class="t" style="left:350.50px;top:226.94px;font-size:27px;line-height:27px;color:#cfcfcf;transform:scaleX(0.8076);">S</span>
<div style="left:350px;top:251.5px;width:16px;height:2px;background:#cfcfcf;"></div>
<div style="left:208px;top:144px;width:2px;height:124px;background:#484848;"></div>
<div style="left:748px;top:144px;width:2px;height:124px;background:#484848;"></div>
<div style="left:1072px;top:144px;width:2px;height:124px;background:#484848;"></div>
<div style="left:1342px;top:144px;width:2px;height:124px;background:#484848;"></div>
<div style="left:1694px;top:144px;width:2px;height:124px;background:#484848;"></div>
<div style="left:2130px;top:144px;width:2px;height:124px;background:#484848;"></div>
<div style="left:2468px;top:144px;width:2px;height:124px;background:#484848;"></div>
<div style="left:422px;top:224px;width:2px;height:36px;background:#484848;"></div>
<div style="left:528px;top:224px;width:2px;height:36px;background:#484848;"></div>
<div style="left:938px;top:160.5px;width:2px;height:35.5px;background:#484848;"></div>
<div style="left:938px;top:224px;width:2px;height:36px;background:#484848;"></div>
<div style="left:1554.75px;top:224px;width:2px;height:36px;background:#484848;"></div>
<span class="t" style="left:20.00px;top:300.06px;font-size:24.5px;line-height:24.5px;color:#d2d2d2;transform:scaleX(0.9541);">J11</span>
<span class="t" style="left:377.00px;top:302.06px;font-size:24.5px;line-height:24.5px;color:#ececec;transform:scaleX(1.0119);">=SOMMA(D10:G11)</span>
<span class="t" style="left:315.50px;top:293.82px;font-size:34px;line-height:34px;color:#9a9a9a;transform:scaleX(1.0391);font-weight:700;font-style:italic;font-family:'Liberation Serif',serif;">fx</span>
<div style="left:554px;top:250px;width:32px;height:8px;background:#c5e0b4;"></div>
<div style="left:630px;top:250px;width:32px;height:8px;background:#ff0000;"></div>
<svg id="ico" width="2880" height="1800" viewBox="0 0 2880 1800">
<polygon points="40,352.5 40,382 10.5,382" fill="#595959"/>
<polygon points="30,1730 43.5,1719 43.5,1741" fill="#5c5c5c"/>
<polygon points="90,1730 76.5,1719 76.5,1741" fill="#5c5c5c"/>
<path d="M308 1728h20M318 1718v20" stroke="#b8b8b8" stroke-width="4" fill="none"/>
<path d="M2474 1777.5h16" stroke="#f0f0f0" stroke-width="3.5" fill="none"/>
<path d="M2718 1777.5h16M2726 1769.5v16" stroke="#f0f0f0" stroke-width="3.5" fill="none"/>
<polygon points="153,296 160,307.5 146,307.5" fill="#ababab"/>
<polygon points="153,330.5 160,319 146,319" fill="#ababab"/>
<path d="M203.5 305.5l15 15M218.5 305.5l-15 15" stroke="#585858" stroke-width="5" fill="none"/>
<path d="M258 313l9.5 8.5 15-17" stroke="#585858" stroke-width="5" fill="none" stroke-linejoin="miter"/>
<polygon points="2858,307 2872,307 2865,319" fill="#b5b5b5"/>
<path d="M51.1 38.2L64 25.8L76.9 38.2V50.8a2 2 0 0 1-2 2H69.6a2 2 0 0 1-2-2V44.6a1.6 1.6 0 0 0-1.6-1.6H62a1.6 1.6 0 0 0-1.6 1.6V50.8a2 2 0 0 1-2 2H53.1a2 2 0 0 1-2-2Z" stroke="#f2f2f2" stroke-width="2.5" fill="none" stroke-linejoin="round" stroke-linecap="round"/>
<path d="M105.4 31.2a4 4 0 0 1 4-4H125.2L130.8 33.2V48.8a4 4 0 0 1-4 4H109.4a4 4 0 0 1-4-4Z" stroke="#f2f2f2" stroke-width="2.5" fill="none" stroke-linejoin="round" stroke-linecap="round"/>
<path d="M111.9 27.4V32.4a2 2 0 0 0 2 2H120.7a2 2 0 0 0 2-2V27.4" stroke="#f2f2f2" stroke-width="2.5" fill="none" stroke-linejoin="round" stroke-linecap="round"/>
<path d="M109.5 52.6V44.2a2.6 2.6 0 0 1 2.6-2.6H124a2.6 2.6 0 0 1 2.6 2.6V52.6" stroke="#f2f2f2" stroke-width="2.5" fill="none" stroke-linejoin="round" stroke-linecap="round"/>
<path d="M161.5 25V35H171.4" stroke="#f2f2f2" stroke-width="2.5" fill="none" stroke-linejoin="miter" stroke-linecap="round"/>
<path d="M162 34.6L170.4 27.6C173.6 25 178 24.8 181.2 26.8C185.4 29.4 186.2 35 182.6 39.2C181 41 175 46.4 165.4 54.6" stroke="#f2f2f2" stroke-width="2.5" fill="none" stroke-linejoin="round" stroke-linecap="round"/>
<path d="M205.20 37.90L210.00 43.70L214.80 37.90" stroke="#f2f2f2" stroke-width="2.8" fill="none" stroke-linecap="round" stroke-linejoin="round"/>
<path d="M265 25V33.3H256.6" stroke="#f2f2f2" stroke-width="2.5" fill="none" stroke-linejoin="miter" stroke-linecap="round"/>
<path d="M264.6 32.9A14.6 14.6 0 1 0 266.4 39.4" stroke="#f2f2f2" stroke-width="2.5" fill="none" stroke-linejoin="round" stroke-linecap="round"/>
<circle cx="295.6" cy="40.2" r="2.6" fill="#f2f2f2"/>
<circle cx="305.8" cy="40.2" r="2.6" fill="#f2f2f2"/>
<circle cx="316" cy="40.2" r="2.6" fill="#f2f2f2"/>
<circle cx="2769.1" cy="37.1" r="10.05" fill="none" stroke="#f2f2f2" stroke-width="2.6"/>
<path d="M2776.6 44.6L2784.8 52.8" stroke="#f2f2f2" stroke-width="2.6" fill="none" stroke-linejoin="round" stroke-linecap="round"/>
<circle cx="2833.8" cy="36.5" r="4.5" fill="none" stroke="#f2f2f2" stroke-width="2.6"/>
<path d="M2826.4 45.2H2841.6a1.2 1.2 0 0 1 1.2 1.2C2842.8 51.4 2838.8 54.8 2834 54.8C2829.2 54.8 2825.2 51.4 2825.2 46.4a1.2 1.2 0 0 1 1.2-1.2Z" stroke="#f2f2f2" stroke-width="2.6" fill="none" stroke-linejoin="round" stroke-linecap="round"/>
<path d="M2844 27.4H2852a2.8 2.8 0 0 1 2.8 2.8V32.2a2.8 2.8 0 0 1-2.8 2.8H2848.4L2845 38.6V35H2844a2.8 2.8 0 0 1-2.8-2.8V30.2a2.8 2.8 0 0 1 2.8-2.8Z" stroke="#f2f2f2" stroke-width="2.4" fill="#353535" stroke-linejoin="round" stroke-linecap="round"/>
<path d="M1238.6 24.8H1250.8L1259.3 33.3V54H1238.6Z" fill="#f4f4f4"/>
<path d="M1250.8 24.8V33.3H1259.3Z" fill="#c4c4c4"/>
<rect x="1233" y="32" width="15.2" height="14.6" rx="1.6" fill="#5aa77f"/>
<path d="M1237.6 35.6L1243.6 43.2M1243.6 35.6L1237.6 43.2" stroke="#f4fff8" stroke-width="1.6" fill="none"/>
<rect x="1250" y="36.2" width="3" height="2.6" fill="#5aa77f"/><rect x="1254" y="36.2" width="3" height="2.6" fill="#5aa77f"/>
<rect x="1250" y="40.2" width="3" height="2.6" fill="#5aa77f"/><rect x="1254" y="40.2" width="3" height="2.6" fill="#5aa77f"/>
<rect x="1250" y="44.2" width="3" height="2.6" fill="#5aa77f"/><rect x="1254" y="44.2" width="3" height="2.6" fill="#5aa77f"/>
<path d="M2704.1 104.4V118.9H2720.9V114.6" stroke="#dedede" stroke-width="2.2" fill="none" stroke-linejoin="miter"/>
<path d="M2719.6 97.6L2726.2 104.8L2719.6 112.6V108.4C2714.6 108.2 2711 109.8 2708.6 113C2709.2 106.6 2713 102.4 2719.6 101.8Z" stroke="#dedede" stroke-width="1.9" fill="none" stroke-linejoin="round" stroke-linecap="round"/>
<path d="M33.9 162H76.1V176H69.9V168.3H40.4V204.2H58V209.9H33.9Z" fill="#fbd58a"/>
<path d="M36.2 164.2H74V176H69.9V168.3H40.4V204.2H58V207.8H36.2Z" fill="#e8962e"/>
<path d="M43.3 161.4H49.4C49.6 157 51.6 155 55.05 155C58.5 155 60.5 157 60.7 161.4H66.9V168.9H43.3Z" fill="#2b2b2b" stroke="#9c9c9c" stroke-width="2.2" stroke-linejoin="round"/>
<rect x="61.15" y="178.85" width="25.8" height="34" fill="#2b2b2b" stroke="#dcdcdc" stroke-width="2.3"/>
<path d="M99.50 180.40L104.00 185.60L108.50 180.40" stroke="#f2f2f2" stroke-width="3.2" fill="none" stroke-linecap="round" stroke-linejoin="round"/>
<path d="M135.7 150.2L136.7 150.2L149 173.2L147 174.6Z" fill="#d2d2d2"/>
<path d="M148.5 150.2L147.5 150.2L135.2 173.2L137.2 174.6Z" fill="#d2d2d2"/>
<circle cx="136.1" cy="178.1" r="3.15" fill="none" stroke="#3a9ee6" stroke-width="1.9"/>
<circle cx="148.1" cy="178.1" r="3.15" fill="none" stroke="#3a9ee6" stroke-width="1.9"/>
<path d="M136.4 221H127V195H138L141.4 198.4" stroke="#d2d2d2" stroke-width="2" fill="none" stroke-linejoin="miter"/>
<path d="M139 201H149.4L157.2 208.6V225H139Z" stroke="#d2d2d2" stroke-width="2" fill="none" stroke-linejoin="miter"/>
<path d="M149.4 201V208.6H157.2" stroke="#d2d2d2" stroke-width="1.8" fill="none" stroke-linejoin="miter"/>
<path d="M143.8 215.1H152M143.8 219.1H152" stroke="#bdbdbd" stroke-width="2" fill="none" />
<path d="M171.50 208.30L176.00 213.50L180.50 208.30" stroke="#f2f2f2" stroke-width="3.2" fill="none" stroke-linecap="round" stroke-linejoin="round"/>
<g transform="translate(145.75,251.4) rotate(45)"><path d="M-2.3 -2V-14.6a2.3 2.3 0 0 1 4.6 0V-2" fill="none" stroke="#d2d2d2" stroke-width="2" /><rect x="-8.4" y="-1.9" width="16.8" height="3.8" rx="1" fill="#2b2b2b" stroke="#d2d2d2" stroke-width="2"/></g>
<path d="M139.4 246.6Q134.5 251 127 252.7L139.9 267L151 257.8" stroke="#fbd58a" stroke-width="1.9" fill="none" stroke-linejoin="round"/>
<path d="M131.2 257.4L146.8 261.2L139.9 266.4Z" fill="#e8962e"/>
<path d="M492.50 176.50L497.00 181.70L501.50 176.50" stroke="#f2f2f2" stroke-width="3.2" fill="none" stroke-linecap="round" stroke-linejoin="round"/>
<path d="M604.60 176.50L609.10 181.70L613.60 176.50" stroke="#f2f2f2" stroke-width="3.2" fill="none" stroke-linecap="round" stroke-linejoin="round"/>
<text x="649" y="188.2" font-family="Liberation Sans, sans-serif" font-size="36" fill="#dadada" text-anchor="middle" font-weight="400"  stroke="#2b2b2b" stroke-width="1.1">A</text>
<path d="M658.9 169.2L663 164.9L667.3 169.2" stroke="#3a9ee6" stroke-width="2.4" fill="none" stroke-linejoin="round" stroke-linecap="round"/>
<text x="701.9" y="188.2" font-family="Liberation Sans, sans-serif" font-size="27.4" fill="#dadada" text-anchor="middle" font-weight="400"  stroke="#2b2b2b" stroke-width="0.7">A</text>
<path d="M711 165L715.2 169.3L719.5 165" stroke="#3a9ee6" stroke-width="2.4" fill="none" stroke-linejoin="round" stroke-linecap="round"/>
<path d="M389.25 240.10L393.75 245.30L398.25 240.10" stroke="#f2f2f2" stroke-width="3.2" fill="none" stroke-linecap="round" stroke-linejoin="round"/>
<rect x="449.1" y="227" width="27.9" height="28.1" fill="none" stroke="#f2f2f2" stroke-width="2.2"/>
<path d="M452.3 241.1H474.3" stroke="#f2f2f2" stroke-width="2" fill="none" stroke-dasharray="2 2.05"/>
<path d="M463.1 230.6V252.6" stroke="#f2f2f2" stroke-width="2" fill="none" stroke-dasharray="2 2.05"/>
<path d="M495.50 240.10L500.00 245.30L504.50 240.10" stroke="#f2f2f2" stroke-width="3.2" fill="none" stroke-linecap="round" stroke-linejoin="round"/>
<path d="M570 229.9L578.9 238.8L568.3 248.6L559.4 239.5Z" stroke="#d2d2d2" stroke-width="2" fill="none" stroke-linejoin="round" stroke-linecap="round"/>
<path d="M568.3 232.6V229.6A2.75 2.75 0 0 1 573.8 229.6V236.8" stroke="#d2d2d2" stroke-width="1.9" fill="none" stroke-linejoin="round" stroke-linecap="round"/>
<path d="M576.2 234.2C580.6 233.4 583.6 238.6 582.4 246.2C580.8 242.2 579.4 238.6 576.2 234.2Z" fill="#62b0ea"/>
<path d="M601.50 240.10L606.00 245.30L610.50 240.10" stroke="#f2f2f2" stroke-width="3.2" fill="none" stroke-linecap="round" stroke-linejoin="round"/>
<text x="646.35" y="248.5" font-family="Liberation Sans, sans-serif" font-size="31" fill="#dadada" text-anchor="middle" font-weight="400"  stroke="#2b2b2b" stroke-width="0.9">A</text>
<path d="M677.50 240.10L682.00 245.30L686.50 240.10" stroke="#f2f2f2" stroke-width="3.2" fill="none" stroke-linecap="round" stroke-linejoin="round"/>
<path d="M780 163.2H808" stroke="#dadada" stroke-width="2.4" fill="none" />
<path d="M785 171.4H803" stroke="#dadada" stroke-width="2.4" fill="none" />
<path d="M780 179.6H808" stroke="#dadada" stroke-width="2.4" fill="none" />
<path d="M832 169.2H860" stroke="#dadada" stroke-width="2.4" fill="none" />
<path d="M837 177.4H855" stroke="#dadada" stroke-width="2.4" fill="none" />
<path d="M832 185.4H860" stroke="#dadada" stroke-width="2.4" fill="none" />
<path d="M884 177H912" stroke="#dadada" stroke-width="2.4" fill="none" />
<path d="M889 185.2H907" stroke="#dadada" stroke-width="2.4" fill="none" />
<path d="M884 193.2H912" stroke="#dadada" stroke-width="2.4" fill="none" />
<path d="M780 228.6H808" stroke="#dadada" stroke-width="2.4" fill="none" />
<path d="M780 236.8H800" stroke="#dadada" stroke-width="2.4" fill="none" />
<path d="M780 245H808" stroke="#dadada" stroke-width="2.4" fill="none" />
<path d="M780 253.2H800" stroke="#dadada" stroke-width="2.4" fill="none" />
<path d="M832 228.6H860" stroke="#dadada" stroke-width="2.4" fill="none" />
<path d="M836 236.8H856" stroke="#dadada" stroke-width="2.4" fill="none" />
<path d="M832 245H860" stroke="#dadada" stroke-width="2.4" fill="none" />
<path d="M836 253.2H856" stroke="#dadada" stroke-width="2.4" fill="none" />
<path d="M884 228.6H912" stroke="#dadada" stroke-width="2.4" fill="none" />
<path d="M892 236.8H912" stroke="#dadada" stroke-width="2.4" fill="none" />
<path d="M884 245H912" stroke="#dadada" stroke-width="2.4" fill="none" />
<path d="M892 253.2H912" stroke="#dadada" stroke-width="2.4" fill="none" />
<path d="M966 228.9H994M966 253.1H994M982 236.9H994M982 245H994" stroke="#dadada" stroke-width="2.4" fill="none" />
<path d="M978 240.9H967.4M972 236.1L967.2 240.9L972 245.7" stroke="#3a9ee6" stroke-width="2.5" fill="none" stroke-linejoin="round" stroke-linecap="round"/>
<path d="M1018 228.9H1046M1018 253.1H1046M1034 236.9H1046M1034 245H1046" stroke="#dadada" stroke-width="2.4" fill="none" />
<path d="M1018 240.9H1028.8M1024.2 236.1L1029 240.9L1024.2 245.7" stroke="#3a9ee6" stroke-width="2.5" fill="none" stroke-linejoin="round" stroke-linecap="round"/>
<text transform="translate(972.3,186.9) rotate(-46)" font-family="Liberation Sans, sans-serif" font-size="21.5" fill="#dadada" stroke="#2b2b2b" stroke-width="0.5">ab</text>
<path d="M975.2 190.6L995 171.1M988.2 170.3H995.9V177.8" stroke="#3a9ee6" stroke-width="2.2" fill="none" stroke-linejoin="miter" stroke-linecap="butt"/>
<path d="M1011.50 176.50L1016.00 181.70L1020.50 176.50" stroke="#f2f2f2" stroke-width="3.2" fill="none" stroke-linecap="round" stroke-linejoin="round"/>
<text x="1102.2" y="177.7" font-family="Liberation Sans, sans-serif" font-size="22.5" fill="#dadada" text-anchor="start" font-weight="400" textLength="24" lengthAdjust="spacingAndGlyphs" stroke="#2b2b2b" stroke-width="0.7">ab</text>
<text x="1102.2" y="192.3" font-family="Liberation Sans, sans-serif" font-size="21" fill="#dadada" text-anchor="start" font-weight="400"  stroke="#2b2b2b" stroke-width="0.7">c</text>
<path d="M1128.9 178.6C1129.6 184 1126 187.2 1121.4 187.2H1115.6M1121.4 181.4L1115.2 187.2L1121.4 193" stroke="#3a9ee6" stroke-width="2.3" fill="none" stroke-linejoin="round" stroke-linecap="round"/>
<path d="M1282.50 176.50L1287.00 181.70L1291.50 176.50" stroke="#f2f2f2" stroke-width="3.2" fill="none" stroke-linecap="round" stroke-linejoin="round"/>
<path d="M1099.1 232.4V227.1H1127V232.4M1113 227.1V232.4M1099.1 249.6V254.7H1127V249.6M1113 249.6V254.7" stroke="#d0d0d0" stroke-width="2.2" fill="none" />
<rect x="1099.1" y="233.3" width="27.9" height="15.6" fill="none" stroke="#3a9ee6" stroke-width="2.3"/>
<path d="M1103 241.1H1123.2M1108 236.2L1102.8 241.1L1108 246M1118.2 236.2L1123.4 241.1L1118.2 246" stroke="#3a9ee6" stroke-width="2.3" fill="none" stroke-linejoin="round" stroke-linecap="round"/>
<path d="M1304.75 240.40L1309.25 245.60L1313.75 240.40" stroke="#f2f2f2" stroke-width="3.2" fill="none" stroke-linecap="round" stroke-linejoin="round"/>
<path d="M1653.50 176.50L1658.00 181.70L1662.50 176.50" stroke="#f2f2f2" stroke-width="3.2" fill="none" stroke-linecap="round" stroke-linejoin="round"/>
<rect x="1372.1" y="233" width="29.8" height="17.7" fill="none" stroke="#cacaca" stroke-width="2.2"/>
<path d="M1381.6 237.4A5 5 0 0 0 1381.6 246.4M1389 236.8A5.2 5.2 0 0 0 1384.6 242M1392.4 236.8A5.2 5.2 0 0 1 1397 240" stroke="#cacaca" stroke-width="2" fill="none" />
<path d="M1386 243.8A9 4 0 0 1 1404 243.8V258H1386Z" fill="#2b2b2b"/>
<path d="M1388.2 244.6V253.6A6.9 3 0 0 0 1402 253.6V244.6" fill="#2b2b2b" stroke="#f5cf82" stroke-width="2"/>
<path d="M1388.2 249.2A6.9 3 0 0 0 1402 249.2" stroke="#f5cf82" stroke-width="2" fill="none" />
<ellipse cx="1395.1" cy="244.4" rx="6.9" ry="2.9" fill="#e8962e" stroke="#f5cf82" stroke-width="2"/>
<path d="M1418.50 240.40L1423.00 245.60L1427.50 240.40" stroke="#f2f2f2" stroke-width="3.2" fill="none" stroke-linecap="round" stroke-linejoin="round"/>
<text transform="translate(1462.8,255.5) scale(1,1.13)" x="0" y="0" font-family="Liberation Sans, sans-serif" font-size="34" fill="#dadada" text-anchor="middle" stroke="#2b2b2b" stroke-width="0.9">%</text>
<text x="1506.6" y="241.6" font-family="Liberation Serif, serif" font-weight="700" font-size="79" fill="#dadada">,</text>
<path d="M1598.6 234.8H1582.6M1588.2 228.8L1582 234.8L1588.2 240.8" stroke="#3a9ee6" stroke-width="2.4" fill="none" stroke-linejoin="round" stroke-linecap="round"/>
<text x="1611.2" y="239.5" font-family="Liberation Sans, sans-serif" font-size="18" fill="#dadada" text-anchor="end" font-weight="400" textLength="12.6" lengthAdjust="spacingAndGlyphs" stroke="#2b2b2b" stroke-width="0.4">,0</text>
<text x="1611.2" y="255.7" font-family="Liberation Sans, sans-serif" font-size="18" fill="#dadada" text-anchor="end" font-weight="400" textLength="22.6" lengthAdjust="spacingAndGlyphs" stroke="#2b2b2b" stroke-width="0.4">,00</text>
<text x="1663.2" y="239.5" font-family="Liberation Sans, sans-serif" font-size="18" fill="#dadada" text-anchor="end" font-weight="400" textLength="22.6" lengthAdjust="spacingAndGlyphs" stroke="#2b2b2b" stroke-width="0.4">,00</text>
<path d="M1633.4 249.1H1649.6M1644 243.1L1650.2 249.1L1644 255.1" stroke="#3a9ee6" stroke-width="2.4" fill="none" stroke-linejoin="round" stroke-linecap="round"/>
<text x="1663.2" y="255.7" font-family="Liberation Sans, sans-serif" font-size="18" fill="#dadada" text-anchor="end" font-weight="400" textLength="12.6" lengthAdjust="spacingAndGlyphs" stroke="#2b2b2b" stroke-width="0.4">,0</text>
<path d="M1795.7 161.2V202.9M1752 174.8H1806.2M1752 189H1806.2" stroke="#a3a3a3" stroke-width="2" fill="none" />
<rect x="1752" y="161.2" width="54.200000000000045" height="41.70000000000002" fill="none" stroke="#d9d6d2" stroke-width="2.1"/>
<rect x="1761.9" y="160.9" width="24.2" height="13.6" fill="#a72b2b" stroke="#e05a5a" stroke-width="1.5"/>
<rect x="1761.9" y="176.2" width="16.4" height="11.6" fill="#1f6aa5" stroke="#4aa8e0" stroke-width="1.5"/>
<rect x="1761.9" y="189.6" width="28.4" height="13.6" fill="#a72b2b" stroke="#e05a5a" stroke-width="1.5"/>
<path d="M1822.60 180.20L1827.10 185.40L1831.60 180.20" stroke="#f2f2f2" stroke-width="3.2" fill="none" stroke-linecap="round" stroke-linejoin="round"/>
<path d="M1919 161.2V202.9M1936.8 161.2V202.9M1901.2 174.8H1954.9M1901.2 189H1954.9" stroke="#a3a3a3" stroke-width="2" fill="none" />
<rect x="1901.2" y="161.2" width="53.700000000000045" height="41.70000000000002" fill="none" stroke="#d9d6d2" stroke-width="2.1"/>
<rect x="1919" y="174.8" width="36.9" height="29.1" fill="#0764b5"/>
<path d="M1936.8 174.8V203.9M1919 189H1955.9M1919 203.9V174.8H1955.9" stroke="#7cc0f5" stroke-width="1.8" fill="none" />
<path d="M1955 174.8V203.9M1919 203H1955.9" stroke="#7cc0f5" stroke-width="1.8" fill="none" />
<path d="M1959.6000000000001 175.0C1961.2 176.79999999999998 1950.7 190.79999999999998 1937.6000000000001 203.6L1932.2 198.6C1945.2 185.2 1957.8 173.6 1959.6000000000001 175.0Z" fill="#2b2b2b" stroke="#e0e0e0" stroke-width="1.9" stroke-linejoin="round"/>
<path d="M1930.4 199.0L1937.2 205.6C1937.8 212.0 1928.2 215.6 1914.8 208.79999999999998C1921.8 209.2 1921.8 201.39999999999998 1930.4 199.0Z" fill="#0764b5" stroke="#6ab7f0" stroke-width="1.8" stroke-linejoin="round"/>
<path d="M1971.50 180.20L1976.00 185.40L1980.50 180.20" stroke="#f2f2f2" stroke-width="3.2" fill="none" stroke-linecap="round" stroke-linejoin="round"/>
<path d="M2031.8 161.2V202.9M2067 161.2V202.9M2022.1 170.9H2075.8M2022.1 192.6H2075.8" stroke="#a3a3a3" stroke-width="2" fill="none" />
<rect x="2022.1" y="161.2" width="53.70000000000027" height="41.70000000000002" fill="none" stroke="#d9d6d2" stroke-width="2.1"/>
<rect x="2031.8" y="170.9" width="35.2" height="21.7" fill="#0764b5" stroke="#7cc0f5" stroke-width="1.8"/>
<path d="M2068.4 172H2078V205H2043V193.8H2068.4Z" fill="#2b2b2b"/>
<path d="M2080.5 175.0C2082.1 176.79999999999998 2071.6 190.79999999999998 2058.5 203.6L2053.1 198.6C2066.1 185.2 2078.7 173.6 2080.5 175.0Z" fill="#2b2b2b" stroke="#e0e0e0" stroke-width="1.9" stroke-linejoin="round"/>
<path d="M2051.2999999999997 199.0L2058.1 205.6C2058.7 212.0 2049.1 215.6 2035.6999999999998 208.79999999999998C2042.6999999999998 209.2 2042.6999999999998 201.39999999999998 2051.2999999999997 199.0Z" fill="#0764b5" stroke="#6ab7f0" stroke-width="1.8" stroke-linejoin="round"/>
<path d="M2092.50 180.20L2097.00 185.40L2101.50 180.20" stroke="#f2f2f2" stroke-width="3.2" fill="none" stroke-linecap="round" stroke-linejoin="round"/>
<path d="M2177.7 161V202.7M2195.9 161V202.7" stroke="#a3a3a3" stroke-width="2" fill="none" />
<rect x="2160" y="161" width="54" height="41.69999999999999" fill="none" stroke="#d9d6d2" stroke-width="2.1"/>
<path d="M2169.4 175H2218.1V189.1H2169.4L2163 182Z" fill="#0764b5" stroke="#7cc0f5" stroke-width="1.7"/>
<path d="M2182 175V189.1M2199.9 175V189.1" stroke="#7cc0f5" stroke-width="1.7" fill="none" />
<path d="M2158 180.4H2181M2158 183H2181" stroke="#3a9ee6" stroke-width="1.3" fill="none" />
<path d="M2169 168.8L2156.4 180.8L2169 193.4" stroke="#3a9ee6" stroke-width="2.4" fill="none" stroke-linejoin="miter"/>
<path d="M2230.50 180.50L2235.00 185.70L2239.50 180.50" stroke="#f2f2f2" stroke-width="3.2" fill="none" stroke-linecap="round" stroke-linejoin="round"/>
<path d="M2260.1 175.4V161H2313.8V170M2260.1 188.6V202.7H2313.8V194" stroke="#d9d6d2" stroke-width="2.1" fill="none" stroke-linejoin="miter"/>
<path d="M2277.6 161V175M2295.7 161V168M2277.6 189V202.7M2295.7 196V202.7" stroke="#a3a3a3" stroke-width="2" fill="none" />
<path d="M2267.8 175H2292.6L2300 182.1L2292.6 189.1H2267.8Z" fill="#0764b5" stroke="#7cc0f5" stroke-width="1.7"/>
<path d="M2285.8 175V189.1" stroke="#7cc0f5" stroke-width="1.7" fill="none" />
<path d="M2295.2 172.2L2316.8 193.8M2316.8 172.2L2295.2 193.8" stroke="#e8484c" stroke-width="2.4" fill="none" />
<path d="M2330.50 180.50L2335.00 185.70L2339.50 180.50" stroke="#f2f2f2" stroke-width="3.2" fill="none" stroke-linecap="round" stroke-linejoin="round"/>
<path d="M2374.2 161V202.7M2399.9 161V202.7M2360.3 175.1H2413.7M2360.3 188.9H2413.7" stroke="#a3a3a3" stroke-width="2" fill="none" />
<rect x="2360.3" y="161" width="53.399999999999636" height="41.69999999999999" fill="none" stroke="#d9d6d2" stroke-width="2.1"/>
<rect x="2374" y="175.2" width="26" height="14" fill="#0764b5" stroke="#7cc0f5" stroke-width="1.8"/>
<path d="M2372.4 153.2H2401.9M2372.4 150V156.3M2401.9 150V156.3" stroke="#3a9ee6" stroke-width="2" fill="none" />
<path d="M2430.40 180.50L2434.90 185.70L2439.40 180.50" stroke="#f2f2f2" stroke-width="3.2" fill="none" stroke-linecap="round" stroke-linejoin="round"/>
<path d="M2522 158V153.2H2500.4L2513.4 166.1L2500.4 179H2522V174.4" stroke="#d2d2d2" stroke-width="2.2" fill="none" stroke-linejoin="miter"/>
<path d="M2540.60 164.40L2545.10 169.60L2549.60 164.40" stroke="#f2f2f2" stroke-width="3.2" fill="none" stroke-linecap="round" stroke-linejoin="round"/>
<rect x="2496.2" y="196.9" width="29.6" height="26" fill="none" stroke="#d2d2d2" stroke-width="2.2"/>
<path d="M2496.2 200H2525.8" stroke="#d2d2d2" stroke-width="2" fill="none" />
<path d="M2510.1 204.4V218.6M2503.8 212.6L2510.1 219L2516.6 212.6" stroke="#3a9ee6" stroke-width="2.3" fill="none" stroke-linejoin="round" stroke-linecap="round"/>
<path d="M2540.60 208.50L2545.10 213.70L2549.60 208.50" stroke="#f2f2f2" stroke-width="3.2" fill="none" stroke-linecap="round" stroke-linejoin="round"/>
<path d="M2496.4 258.1L2514.5 240.1L2524.4 250.1L2506.4 267.9Z" fill="none" stroke="#d68fda" stroke-width="2.1" stroke-linejoin="miter"/>
<path d="M2498 258.1L2503.6 252.4L2512 260.8L2506.4 266.3Z" fill="#962f9c"/>
<path d="M2540.60 252.50L2545.10 257.70L2549.60 252.50" stroke="#f2f2f2" stroke-width="3.2" fill="none" stroke-linecap="round" stroke-linejoin="round"/>
<text x="2579.05" y="180.1" font-family="Liberation Sans, sans-serif" font-size="34.4" fill="#3a9ee6" text-anchor="middle" font-weight="400" textLength="20.8" lengthAdjust="spacingAndGlyphs" stroke="#2b2b2b" stroke-width="0.8">A</text>
<text x="2577.95" y="208" font-family="Liberation Sans, sans-serif" font-size="34.6" fill="#d2d2d2" text-anchor="middle" font-weight="400" textLength="18.6" lengthAdjust="spacingAndGlyphs" stroke="#2b2b2b" stroke-width="0.8">Z</text>
<path d="M2594.2 169H2623.9V174.4L2612.2 185.6V199.1H2606.2V185.6L2594.2 174.4Z" stroke="#d2d2d2" stroke-width="2.2" fill="none" stroke-linejoin="miter"/>
<path d="M2640.60 180.20L2645.10 185.40L2649.60 180.20" stroke="#f2f2f2" stroke-width="3.2" fill="none" stroke-linecap="round" stroke-linejoin="round"/>
<circle cx="2705.75" cy="175.05" r="19.9" fill="none" stroke="#d2d2d2" stroke-width="2.2"/>
<path d="M2691.4 189.4L2669.6 211.2" stroke="#d2d2d2" stroke-width="2.3" fill="none" />
<path d="M2742.30 180.20L2746.80 185.40L2751.30 180.20" stroke="#f2f2f2" stroke-width="3.2" fill="none" stroke-linecap="round" stroke-linejoin="round"/>
<rect x="2267.2" y="1765.6" width="23.8" height="22.8" rx="1.5" fill="none" stroke="#f2f2f2" stroke-width="2.2"/>
<path d="M2275.1 1765.6V1788.4M2283 1765.6V1788.4M2267.2 1773.2H2291M2267.2 1780.8H2291" stroke="#f2f2f2" stroke-width="2" fill="none" />
<rect x="2338.2" y="1765.6" width="25.8" height="22.8" rx="1.5" fill="none" stroke="#f2f2f2" stroke-width="2.2"/>
<rect x="2344" y="1770.6" width="14.2" height="13" fill="none" stroke="#f2f2f2" stroke-width="1.8"/>
<path d="M2347 1774.8H2355.2M2347 1777.2H2355.2M2347 1779.8H2355.2" stroke="#f2f2f2" stroke-width="1.4" fill="none" />
<rect x="2409.2" y="1765.6" width="25.4" height="22.8" rx="1.5" fill="none" stroke="#f2f2f2" stroke-width="2.2"/>
<path d="M2409.2 1778.4H2425.6V1765.6M2417.4 1765.6V1778.4" stroke="#f2f2f2" stroke-width="2" fill="none" />
</svg>
</div>
</body></html>
